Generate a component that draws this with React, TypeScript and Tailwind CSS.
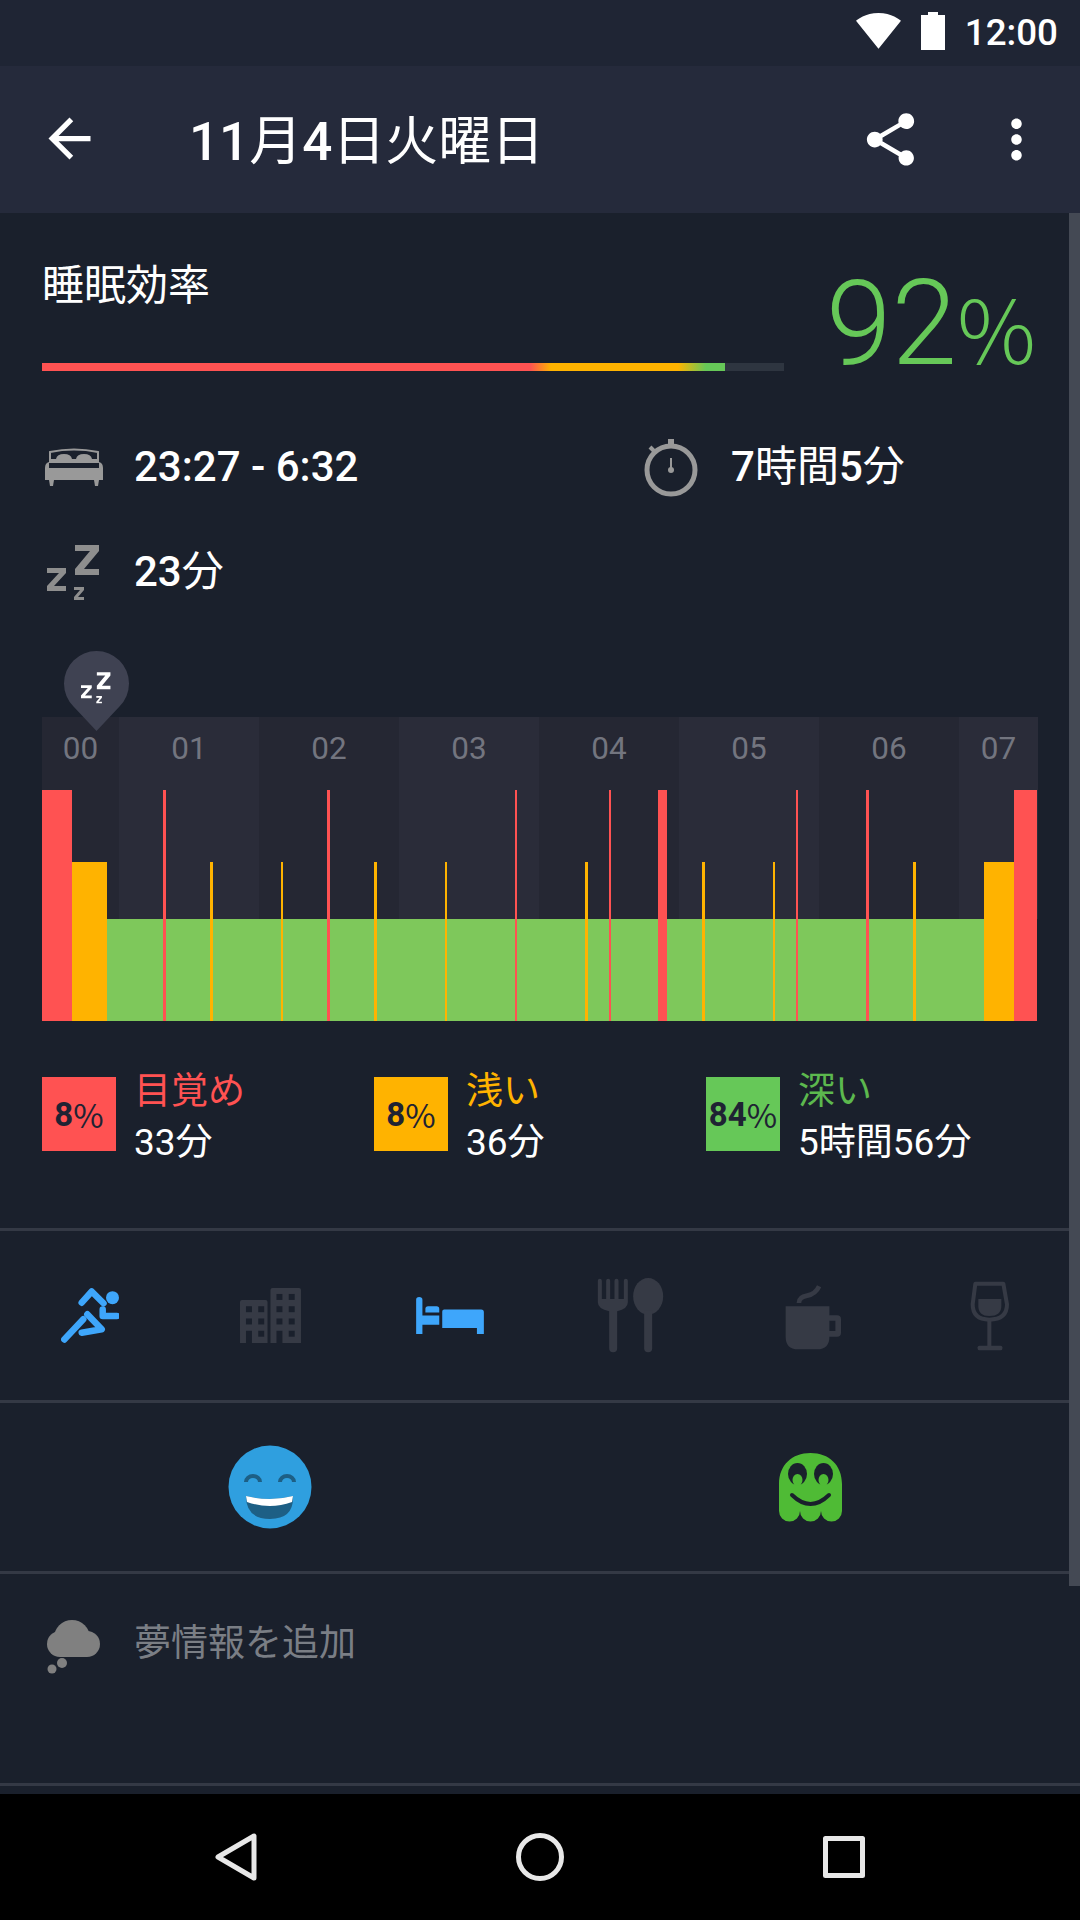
import { ReactNode } from "react";

const BANDS = ["00", "01", "02", "03", "04", "05", "06", "07"];
const BAND_WIDTHS = ["w-[77px]", "w-[140px]", "w-[140px]", "w-[140px]", "w-[140px]", "w-[140px]", "w-[140px]", "w-[79px]"];

// [x, width, type] in chart pixels
const MARKS: [number, number, "r" | "o"][] = [
  [0, 30, "r"],
  [30, 35, "o"],
  [121, 3, "r"],
  [168, 3, "o"],
  [239, 2, "o"],
  [285, 3, "r"],
  [332, 3, "o"],
  [403, 2, "o"],
  [473, 2, "r"],
  [543, 3, "o"],
  [567, 2, "r"],
  [616, 9, "r"],
  [660, 3, "o"],
  [731, 2, "o"],
  [754, 2, "r"],
  [824, 3, "r"],
  [871, 3, "o"],
  [942, 30, "o"],
  [972, 23, "r"],
];

const LEGEND = [
  { pct: "8", label: "目覚め", value: "33", unit: "分", box: "bg-[#ff5252]", text: "text-[#ff5252]" },
  { pct: "8", label: "浅い", value: "36", unit: "分", box: "bg-[#ffb300]", text: "text-[#ffb300]" },
  { pct: "84", label: "深い", value: "5時間56", unit: "分", box: "bg-[#66c858]", text: "text-[#5cb84e]" },
];

const Zzz = ({ className, fill }: { className: string; fill: string }) => (
  <svg viewBox="0 0 53 56" className={className} fill={fill}>
    <path d="M28 1H52V7L37 25H52V31H28V25L43 7H28Z" />
    <path d="M0 24H19V29L7 42H19V47H0V42L12 29H0Z" />
    <path d="M27 43H37V46L31 53H37V56H27V53L33 46H27Z" />
  </svg>
);

const BedOutline = () => (
  <svg viewBox="0 0 58 38" className="w-[58px] h-[38px]" fill="#999999">
    <path d="M5 12V4Q29 -1 53 4V12" fill="none" stroke="#999999" strokeWidth="2" />
    <path d="M11 11Q12 6 19 6T27 11ZM31 11Q32 6 39 6T47 11Z" />
    <path d="M4 11H54V15H4Z" />
    <path d="M0 20Q0 15 4 14H54Q58 15 58 20V32H0Z" />
    <rect x="4" y="15" width="50" height="5" fill="#1a202c" />
    <path d="M4 32H9L8 38H5ZM49 32H54L53 38H50Z" />
  </svg>
);

const Timer = () => (
  <svg viewBox="0 0 56 60" className="w-[56px] h-[60px]" fill="none" stroke="#999999">
    <circle cx="28" cy="33" r="24" strokeWidth="5" />
    <path d="M28 2V8" strokeWidth="6" />
    <path d="M7 10L11 14" strokeWidth="4" />
    <path d="M28 21V33" strokeWidth="2" />
    <circle cx="28" cy="33" r="3" fill="#999999" stroke="none" />
  </svg>
);

const RunIcon = () => (
  <svg viewBox="0 0 58 55" className="w-[58px] h-[55px]" fill="none" stroke="#3ea6fb" strokeWidth="6.5" strokeLinecap="round" strokeLinejoin="round">
    <circle cx="51.5" cy="9.7" r="6.5" fill="#3ea6fb" stroke="none" />
    <path d="M20.7 14.7L30.7 3.5L42.5 15.3" />
    <path d="M41.7 21.5V28H56" />
    <path d="M26.3 26.3L40.7 41.3L20.7 44.7" />
    <path d="M22.3 31.3L3.3 51.5" />
  </svg>
);

const BuildingIcon = () => {
  const windows = [
    [738, 70], [775, 70], [738, 107], [775, 107], [738, 144], [775, 144], [775, 181],
    [646, 107], [683, 107], [646, 144], [683, 144], [683, 181],
  ];
  return (
    <svg viewBox="628 52 184 166" className="w-[61px] h-[55px]">
      <path d="M628 94Q628 88 634 88H705Q711 88 711 94V218H664V181H646V218H628Z" fill="#363a45" />
      <path d="M720 58Q720 52 726 52H806Q812 52 812 58V218H756V181H738V218H720Z" fill="#363a45" />
      {windows.map(([x, y]) => (
        <rect key={`${x}-${y}`} x={x} y={y} width="18" height="18" fill="#1a202c" />
      ))}
    </svg>
  );
};

const SleepIcon = () => (
  <svg viewBox="48 78 205 112" className="w-[68px] h-[37px]" fill="#3ea6fb">
    <path d="M48 86Q48 78 57 78Q67 78 67 86V134H118V162H67V190H48Z" />
    <path d="M76 114Q76 106 84 106H110Q118 106 118 114V125H76Z" />
    <path d="M127 122Q127 116 133 116H245Q253 116 253 124V190H232V172H127Z" />
  </svg>
);

const FoodIcon = () => (
  <svg viewBox="590 22 200 225" className="w-[67px] h-[75px]" fill="#363a45">
    <path d="M592 30a6 6 0 0 1 12 0V85H617V30a6 6 0 0 1 12 0V85H642V30a6 6 0 0 1 12 0V85H670V30a6 6 0 0 1 12 0V95Q682 115 650 122V233a12 12 0 0 1-24 0V122Q592 115 592 95Z" />
    <ellipse cx="743" cy="77" rx="45" ry="55" />
    <path d="M731 120H755V233a12 12 0 0 1-24 0Z" />
  </svg>
);

const CoffeeIcon = () => (
  <svg viewBox="490 55 175 205" className="w-[58px] h-[68px] ml-[5px]" fill="#363a45">
    <path d="M495 128H627V155H650Q662 155 662 167V208Q662 220 650 220H627Q627 258 590 258H532Q495 258 495 220ZM627 172V203H645V172Z" fillRule="evenodd" />
    <path d="M535 118Q535 100 560 96T596 68" fill="none" stroke="#363a45" strokeWidth="14" />
  </svg>
);

const WineIcon = () => (
  <svg viewBox="1050 60 120 210" className="w-[40px] h-[70px]" fill="#363a45">
    <path d="M1066 68H1150L1161 130Q1161 176 1108 176Q1058 176 1058 130Z" fill="none" stroke="#363a45" strokeWidth="12" strokeLinejoin="round" />
    <path d="M1075 114H1144V135Q1144 165 1108 165Q1075 165 1075 135Z" />
    <rect x="1102" y="176" width="12" height="80" />
    <rect x="1073" y="254" width="74" height="14" rx="5" />
  </svg>
);

const Smiley = () => (
  <svg viewBox="0 0 84 84" className="w-[84px] h-[84px]">
    <circle cx="42" cy="42" r="41.5" fill="#2f9fdf" />
    <path d="M18 37a7 6 0 0 1 14 0M52 37a7 6 0 0 1 14 0" fill="none" stroke="#1d5f85" strokeWidth="4" />
    <path d="M18 51Q42 57 65 51Q66 74 42 74Q18 74 18 51Z" fill="#1d5f85" />
    <path d="M18 51Q42 57 65 51L64 57Q42 65 19 57Z" fill="#ffffff" />
  </svg>
);

const Ghost = () => (
  <svg viewBox="0 0 63 69" className="w-[63px] h-[69px]">
    <path d="M0 31C0 12 13 0 31.500 0S63 12 63 31V58a10.500 10.500 0 0 1-21 0a10.500 10.500 0 0 1-21 0a10.500 10.500 0 0 1-21 0Z" fill="#4fbb35" />
    <ellipse cx="18.500" cy="21" rx="9.500" ry="11" fill="#1a202c" />
    <ellipse cx="44.500" cy="21" rx="9.500" ry="11" fill="#1a202c" />
    <ellipse cx="18.500" cy="27" rx="5" ry="6" fill="#4fbb35" />
    <ellipse cx="44.500" cy="27" rx="5" ry="6" fill="#4fbb35" />
    <path d="M13 42Q31.500 60 50 42" fill="none" stroke="#1a202c" strokeWidth="4" strokeLinecap="round" />
  </svg>
);

const Cloud = () => (
  <svg viewBox="0 0 53 56" className="w-[53px] h-[56px]" fill="#808080">
    <circle cx="25" cy="18" r="18" />
    <circle cx="13" cy="24" r="13" />
    <circle cx="40" cy="24" r="13" />
    <rect x="13" y="20" width="27" height="17" />
    <circle cx="15" cy="43" r="5" />
    <circle cx="5" cy="49" r="4.500" />
  </svg>
);

const Divider = () => <div className="h-[3px] bg-[#343945]" />;

const IconCell = ({ children }: { children: ReactNode }) => (
  <div className="flex items-center justify-center">{children}</div>
);

const Cjk = ({ children }: { children: ReactNode }) => <span className="font-normal">{children}</span>;

export default function App() {
  return (
    <div className="relative w-[1080px] h-[1920px] flex flex-col overflow-hidden bg-[#1a202c] text-white font-['Roboto','Noto_Sans_CJK_JP',sans-serif]">
      {/* Status bar */}
      <div className="h-[66px] bg-[#1f2534] flex items-center justify-end pr-[22px]">
        <svg viewBox="0.36 3 23.28 18.5" className="w-[45px] h-[36px] mr-[20px] mb-[4px]" fill="#ffffff">
          <path d="M12.01 21.49L23.64 7c-.45-.34-4.93-4-11.64-4C5.28 3 .81 6.66.36 7l11.63 14.49.01.01z" />
        </svg>
        <svg viewBox="0 0 24 38" className="w-[24px] h-[38px] mr-[20px] mb-[4px]" fill="#ffffff">
          <path d="M7 0H17V3H24V38H0V3H7Z" />
        </svg>
        <span className="text-[36.750px] font-medium">12:00</span>
      </div>

      {/* App bar */}
      <div className="h-[147px] bg-[#252a3b] flex items-center pl-[38px] pr-[32px]">
        <svg viewBox="0 0 24 24" className="w-[63px] h-[63px] mb-[2px]" fill="#ffffff">
          <path d="M20 11H7.830l5.590-5.590L12 4l-8 8 8 8 1.410-1.410L7.830 13H20v-2z" />
        </svg>
        <h1 className="ml-[88px] pt-[6px] flex-1 text-[53px] font-medium">
          11<Cjk>月</Cjk>4<Cjk>日火曜日</Cjk>
        </h1>
        <svg viewBox="0 0 24 24" className="w-[63px] h-[63px]" fill="#ffffff">
          <path d="M18 16.080c-.76 0-1.440.3-1.960.77L8.910 12.700c.05-.23.09-.46.09-.7s-.04-.47-.09-.7l7.050-4.110c.54.5 1.250.81 2.040.81 1.660 0 3-1.340 3-3s-1.340-3-3-3-3 1.340-3 3c0 .24.04.47.09.7L8.040 9.810C7.500 9.310 6.790 9 6 9c-1.660 0-3 1.340-3 3s1.340 3 3 3c.79 0 1.500-.31 2.040-.81l7.120 4.160c-.05.21-.08.43-.08.65 0 1.610 1.310 2.920 2.920 2.920 1.610 0 2.920-1.310 2.920-2.920s-1.310-2.920-2.920-2.920z" />
        </svg>
        <svg viewBox="0 0 24 24" className="w-[63px] h-[63px] ml-[63px]" fill="#ffffff">
          <path d="M12 8c1.100 0 2-.9 2-2s-.9-2-2-2-2 .9-2 2 .9 2 2 2zm0 2c-1.100 0-2 .9-2 2s.9 2 2 2 2-.9 2-2-.9-2-2-2zm0 6c-1.100 0-2 .9-2 2s.9 2 2 2 2-.9 2-2-.9-2-2-2z" />
        </svg>
      </div>

      {/* Scrolling content */}
      <div className="relative flex-1 overflow-hidden">
        <div className="absolute right-0 top-0 w-[11px] h-[1373px] bg-[#444954]" />

        {/* Sleep efficiency */}
        <div className="flex h-[158px] items-start pl-[42px]">
          <div className="w-[742px] pt-[45px]">
            <div className="text-[42px] leading-[56px]">睡眠効率</div>
            <div className="mt-[49px] h-[8px] bg-[#2e3540]">
              <div className="h-full w-[683px] bg-[linear-gradient(to_right,#ff5252_0px,#ff5252_488px,#ffb300_509px,#ffb300_636px,#66c858_664px,#66c858_683px)]" />
            </div>
          </div>
          <div className="flex-1 pl-[42px] pt-[51px] text-[#66c858] leading-[120px] whitespace-nowrap">
            <span className="text-[118px] font-light">92</span>
            <span className="text-[88px] font-light font-['Noto_Sans_CJK_JP',sans-serif]">%</span>
          </div>
        </div>

        {/* Time in bed, duration, time to fall asleep */}
        <div className="mt-[43px] pl-[42px]">
          <div className="flex h-[105px] items-center">
            <div className="flex w-[601px] items-center">
              <div className="w-[92px] pl-[3px]">
                <BedOutline />
              </div>
              <span className="text-[42px] font-medium">23:27 - 6:32</span>
            </div>
            <div className="w-[88px]">
              <Timer />
            </div>
            <span className="text-[42px] font-medium">
              7<Cjk>時間</Cjk>5<Cjk>分</Cjk>
            </span>
          </div>
          <div className="flex h-[105px] items-center">
            <div className="w-[92px] pl-[5px]">
              <Zzz className="w-[53px] h-[56px]" fill="#8e8e8e" />
            </div>
            <span className="text-[42px] font-medium">
              23<Cjk>分</Cjk>
            </span>
          </div>
        </div>

        {/* Hypnogram */}
        <div className="relative mt-[93px] mx-[42px] w-[996px] h-[304px]">
          <div className="flex h-[202px]">
            {BANDS.map((h, i) => (
              <div
                key={h}
                className={`${BAND_WIDTHS[i]} ${i % 2 ? "bg-[#2a2c39]" : "bg-[#252733]"} text-center text-[31.500px] leading-[64px] text-[#73757f]`}
              >
                {h}
              </div>
            ))}
          </div>
          <svg viewBox="0 0 996 304" className="absolute inset-0 w-[996px] h-[304px]" shapeRendering="crispEdges">
            <rect x="65" y="202" width="877" height="102" fill="#7ec85b" />
            {MARKS.map(([x, w, t]) => (
              <rect
                key={x}
                x={x}
                y={t === "r" ? 73 : 145}
                width={w}
                height={t === "r" ? 231 : 159}
                fill={t === "r" ? "#ff5252" : "#ffb300"}
              />
            ))}
          </svg>
          <div className="absolute left-[22px] top-[-66px] w-[65px] h-[80px]">
            <svg viewBox="0 0 65 80" className="w-[65px] h-[80px]" fill="#3f4252">
              <path d="M32.500 80L9.500 55.500A32.500 32.500 0 1 1 55.500 55.500Z" />
            </svg>
            <Zzz className="absolute left-[17px] top-[20px] w-[30px] h-[33px]" fill="#ffffff" />
          </div>
        </div>

        {/* Legend */}
        <div className="mt-[42px] ml-[42px] grid grid-cols-[332px_332px_1fr] h-[102px]">
          {LEGEND.map((l) => (
            <div key={l.label} className="flex items-center">
              <div className={`${l.box} w-[74px] h-[74px] flex items-center justify-center text-[33px] leading-none text-[#1f2333] whitespace-nowrap`}>
                <span className="font-bold">{l.pct}</span>
                <span className="font-['Noto_Sans_CJK_JP',sans-serif]">%</span>
              </div>
              <div className="ml-[18px] mt-[3px] -mb-[3px] text-[37px] leading-[51px]">
                <div className={l.text}>{l.label}</div>
                <div>
                  {l.value}
                  {l.unit}
                </div>
              </div>
            </div>
          ))}
        </div>

        <div className="mt-[63px]">
          <Divider />
        </div>

        {/* Tags */}
        <div className="grid grid-cols-6 h-[169px]">
          <IconCell><RunIcon /></IconCell>
          <IconCell><BuildingIcon /></IconCell>
          <IconCell><SleepIcon /></IconCell>
          <IconCell><FoodIcon /></IconCell>
          <IconCell><CoffeeIcon /></IconCell>
          <IconCell><WineIcon /></IconCell>
        </div>
        <Divider />

        {/* Mood */}
        <div className="grid grid-cols-2 h-[168px]">
          <IconCell><Smiley /></IconCell>
          <IconCell><Ghost /></IconCell>
        </div>
        <Divider />

        {/* Dream note */}
        <div className="flex h-[209px] items-start pl-[47px] pt-[46px]">
          <Cloud />
          <span className="ml-[34px] text-[37px] leading-[48px] text-[#7a7e85]">夢情報を追加</span>
        </div>
        <Divider />
      </div>

      {/* Navigation bar */}
      <div className="h-[126px] bg-black flex items-center justify-center gap-[256px]">
        <svg viewBox="0 0 48 48" className="w-[48px] h-[48px]" fill="none" stroke="#e8e8e8" strokeWidth="5" strokeLinejoin="round">
          <path d="M42 3V45L6 24Z" />
        </svg>
        <svg viewBox="0 0 48 48" className="w-[48px] h-[48px]" fill="none" stroke="#e8e8e8" strokeWidth="5">
          <circle cx="24" cy="24" r="21.500" />
        </svg>
        <svg viewBox="0 0 48 48" className="w-[48px] h-[48px]" fill="none" stroke="#e8e8e8" strokeWidth="5" strokeLinejoin="round">
          <rect x="5.500" y="5.500" width="37" height="37" />
        </svg>
      </div>
    </div>
  );
}
